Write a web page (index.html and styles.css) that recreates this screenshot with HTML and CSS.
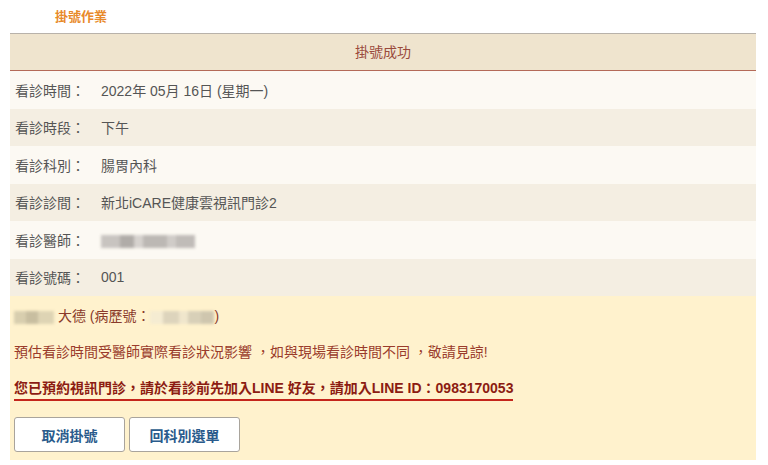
FILE: index.html
```html
<!DOCTYPE html>
<html lang="zh-Hant">
<head>
<meta charset="utf-8">
<link rel="stylesheet" href="styles.css">
</head>
<body>
<div class="page">
  <div class="title">掛號作業</div>
  <div class="table">
    <div class="head">掛號成功</div>
    <div class="row odd"><span class="label">看診時間：</span><span class="value">2022年 05月 16日 (星期一)</span></div>
    <div class="row even"><span class="label">看診時段：</span><span class="value">下午</span></div>
    <div class="row odd"><span class="label">看診科別：</span><span class="value">腸胃內科</span></div>
    <div class="row even"><span class="label">看診診間：</span><span class="value">新北iCARE健康雲視訊門診2</span></div>
    <div class="row odd"><span class="label">看診醫師：</span><span class="value"><span class="blur blur-doc"></span></span></div>
    <div class="row even"><span class="label">看診號碼：</span><span class="value">001</span></div>
    <div class="notice">
      <div class="line patient"><span class="blur blur-name"></span> 大德 (病歷號：<span class="blur blur-id"></span>)</div>
      <div class="line warn">預估看診時間受醫師實際看診狀況影響 ，如與現場看診時間不同 ，敬請見諒!</div>
      <div class="line strong"><span class="ul">您已預約視訊門診，請於看診前先加入LINE 好友，請加入LINE ID：0983170053</span></div>
      <div class="buttons">
        <button class="btn">取消掛號</button>
        <button class="btn">回科別選單</button>
      </div>
    </div>
  </div>
</div>
</body>
</html>
```
FILE: styles.css
```css
* { box-sizing: border-box; }
html, body { margin: 0; padding: 0; background: #fff; }
body {
  font-family: "Liberation Sans", "Noto Sans CJK TC", sans-serif;
  font-size: 14px;
  color: #555;
}
.page { padding: 9px 12px 0 10px; }
.title {
  padding-left: 45px;
  color: #e88a2a;
  font-weight: bold;
  font-size: 13px;
  line-height: 16px;
  height: 24px;
}
.table { width: 746px; }
.head {
  height: 38px;
  border-top: 1px solid #b8b2aa;
  border-bottom: 1px solid #b46a58;
  background: #efe4ce;
  color: #9a4a3c;
  text-align: center;
  line-height: 36px;
  font-size: 14px;
}
.row {
  height: 37.5px;
  display: flex;
  align-items: center;
  padding-left: 5px;
}
.odd { background: #fcf9f3; }
.even { background: #f4eee2; }
.label { width: 86px; color: #555; }
.value { color: #555; }
.blur {
  display: inline-block;
  vertical-align: middle;
  height: 13px;
  filter: blur(1.5px);
}
.blur-doc {
  width: 94px;
  background: linear-gradient(90deg, #c8c4c0 0 20%, #b0aca8 20% 35%, #d6d2ce 35% 45%, #bcb8b4 45% 70%, #d0ccc8 70% 80%, #c0bcb8 80% 100%);
}
.notice {
  background: #fff2cd;
  padding: 11px 4px 8px 4px;
}
.line { line-height: 18px; margin-bottom: 18px; }
.patient { color: #8a3a2a; }
.blur-name {
  width: 40px;
  background: linear-gradient(90deg, #d8ceae 0 30%, #c8bea0 30% 60%, #ded4b4 60% 100%);
}
.blur-id {
  width: 64px;
  background: linear-gradient(90deg, #f5ecd2 0 20%, #ddd4bc 20% 45%, #f0e6cc 45% 60%, #d8d0b8 60% 80%, #cfc6ae 80% 100%);
}
.warn { color: #9a3b2b; }
.strong { color: #8c1c12; font-weight: bold; margin-bottom: 20px; }
.ul { border-bottom: 2px solid #c4261c; padding-bottom: 3px; }
.buttons { display: flex; gap: 4px; }
.btn {
  width: 111px;
  height: 35px;
  background: #fff;
  border: 1px solid #a9a49c;
  border-radius: 3px;
  font-family: "Liberation Sans", "Noto Sans CJK TC", sans-serif;
  font-size: 14px;
  font-weight: bold;
  color: #2a5b8c;
  padding: 0;
}
```
